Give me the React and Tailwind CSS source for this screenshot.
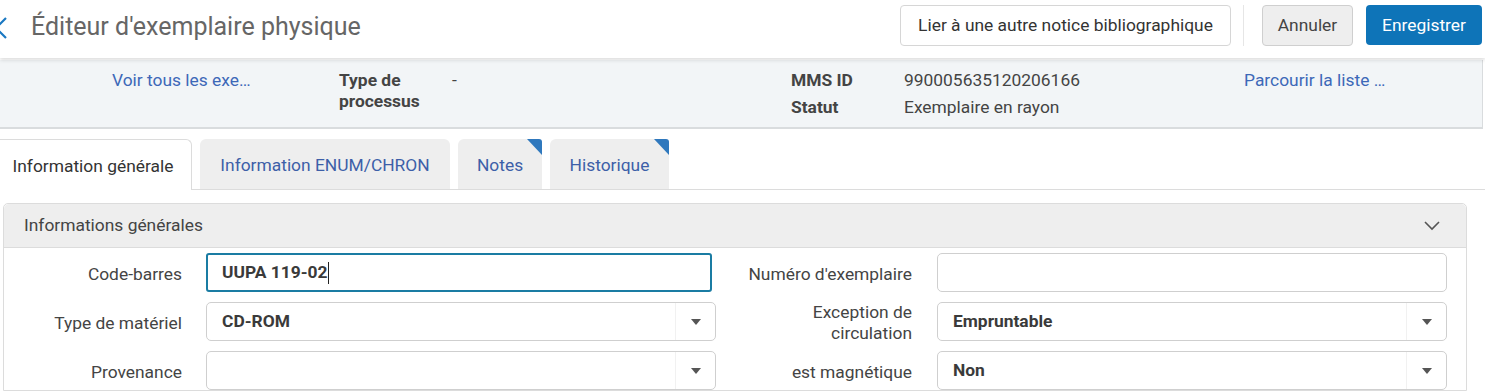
import React from 'react';

const FONT = { fontFamily: 'Roboto, "Liberation Sans", sans-serif' };

function Caret() {
    return (
        <svg width="10" height="6" viewBox="0 0 10 6" className="block">
            <path d="M0 0 L10 0 L5 6 Z" fill="#555" />
        </svg>
    );
}

function SelectBox({ value, className = '' }) {
    return (
        <div className={`h-[39px] w-[510px] flex items-stretch border border-[#cfcfcf] rounded-[5px] bg-white ${className}`}>
            <div className="flex-1 flex items-center pl-[15px] font-bold text-[17.4px] text-[#3a3a3a]">{value}</div>
            <div className="w-[40px] flex items-center justify-center border-l border-[#f1f1f1]">
                <Caret />
            </div>
        </div>
    );
}

function Tab({ label, width, active, flag }) {
    if (active) {
        return (
            <div className={`relative ${width} h-[51px] -mb-px flex items-center justify-center pt-[2px] bg-white border border-b-0 border-[#dcdcdc] rounded-t-[6px] text-[17.4px] text-[#333]`}>
                {label}
            </div>
        );
    }
    return (
        <div className={`relative ${width} h-[50px] flex items-center justify-center pt-[2px] bg-[#eeeeee] rounded-t-[6px] text-[17.4px] text-[#3d5fa8]`}>
            {label}
            {flag && (
                <svg width="15" height="16" viewBox="0 0 15 16" className="absolute right-0 top-0">
                    <path d="M0 0 L12 0 Q15 0 15 3 L15 16 Z" fill="#2f78bd" />
                </svg>
            )}
        </div>
    );
}

export default function App() {
    return (
        <div className="w-[1485px] h-[391px] overflow-hidden bg-white" style={FONT}>
            {/* Header */}
            <div className="relative z-10 h-[58px] flex items-center justify-between pr-[3px] bg-white shadow-[0_2px_4px_rgba(0,0,0,0.14)]">
                <div className="flex items-center">
                    <svg width="14" height="22" viewBox="0 0 14 22" className="ml-[-6px] mt-[-2px]">
                        <path d="M12 1 L2 11 L12 21" fill="none" stroke="#1a78c2" strokeWidth="2.2" />
                    </svg>
                    <h1 className="ml-[23px] text-[25px] text-[#666] font-normal leading-none mt-[-6px]">Éditeur d'exemplaire physique</h1>
                </div>
                <div className="flex items-center mt-[-8px]">
                    <button className="h-[41px] w-[331px] border border-[#d6d6d6] rounded-[4px] bg-white text-[17.4px] text-[#333]">
                        Lier à une autre notice bibliographique
                    </button>
                    <div className="w-px h-[41px] bg-[#e6e6e6] mx-[12px]"></div>
                    <button className="ml-[6px] h-[41px] w-[91px] border border-[#cfcfcf] rounded-[4px] bg-[#eeeeee] text-[17.4px] text-[#444]">
                        Annuler
                    </button>
                    <button className="ml-[13px] h-[40px] w-[116px] rounded-[4px] bg-[#0e74b8] text-[17.4px] text-white">
                        Enregistrer
                    </button>
                </div>
            </div>

            {/* Info band */}
            <div className="mt-[2px] mr-[2px] h-[69px] bg-[#f2f5f7] border-b-2 border-r border-[#d9dcde] flex pt-[10px] text-[17.4px] text-[#444] leading-[21px]">
                <div className="pl-[112px] w-[339px] text-[#3d68b8]">Voir tous les exe…</div>
                <div className="w-[113px] font-bold">Type de<br />processus</div>
                <div className="w-[339px]">-</div>
                <div className="w-[113px] font-bold flex flex-col gap-[6px]">
                    <span>MMS ID</span>
                    <span>Statut</span>
                </div>
                <div className="w-[340px] flex flex-col gap-[6px]">
                    <span>990005635120206166</span>
                    <span>Exemplaire en rayon</span>
                </div>
                <div className="text-[#3d68b8]">Parcourir la liste …</div>
            </div>

            {/* Tabs */}
            <div className="mt-[10px] flex items-end gap-[8px] border-b border-[#dcdcdc] pl-0">
                <div className="ml-[-6px]"><Tab label="Information générale" width="w-[198px]" active /></div>
                <Tab label="Information ENUM/CHRON" width="w-[250px]" />
                <Tab label="Notes" width="w-[84px]" flag />
                <Tab label="Historique" width="w-[119px]" flag />
            </div>

            {/* Panel */}
            <div className="mt-[13px] ml-[3px] mr-[18px] border border-[#dcdcdc] rounded-t-[5px]">
                <div className="h-[44px] bg-[#eeeeee] border-b border-[#dcdcdc] rounded-t-[5px] flex items-center justify-between pl-[20px] pr-[26px]">
                    <span className="text-[17.4px] text-[#444]">Informations générales</span>
                    <svg width="16" height="10" viewBox="0 0 16 10">
                        <path d="M1 1 L8 8 L15 1" fill="none" stroke="#555" strokeWidth="1.6" />
                    </svg>
                </div>

                <div className="pt-[5px] flex flex-col gap-[10px] text-[17.4px] text-[#444]">
                    <div className="h-[39px] flex items-center">
                        <div className="w-[178px] text-right pt-[3px]">Code-barres</div>
                        <div className="ml-[24px] w-[510px]">
                            <div className="h-[39px] w-[506px] border-2 border-[#1a7ca3] rounded-[3px] flex items-center pl-[14px] font-bold text-[#3a3a3a]">
                                UUPA 119-02<span className="w-px h-[22px] bg-[#222] ml-[1px]"></span>
                            </div>
                        </div>
                        <div className="w-[196px] text-right pt-[3px]">Numéro d'exemplaire</div>
                        <div className="ml-[25px] h-[39px] w-[510px] border border-[#cfcfcf] rounded-[5px] bg-white"></div>
                    </div>
                    <div className="h-[39px] flex items-center">
                        <div className="w-[178px] text-right pt-[3px]">Type de matériel</div>
                        <SelectBox value="CD-ROM" className="ml-[24px]" />
                        <div className="w-[196px] text-right leading-[21px] pt-[2px]">Exception de<br />circulation</div>
                        <SelectBox value="Empruntable" className="ml-[25px]" />
                    </div>
                    <div className="h-[39px] flex items-center">
                        <div className="w-[178px] text-right pt-[3px]">Provenance</div>
                        <SelectBox value="" className="ml-[24px]" />
                        <div className="w-[196px] text-right pt-[3px]">est magnétique</div>
                        <SelectBox value="Non" className="ml-[25px]" />
                    </div>
                </div>
            </div>
        </div>
    );
}
